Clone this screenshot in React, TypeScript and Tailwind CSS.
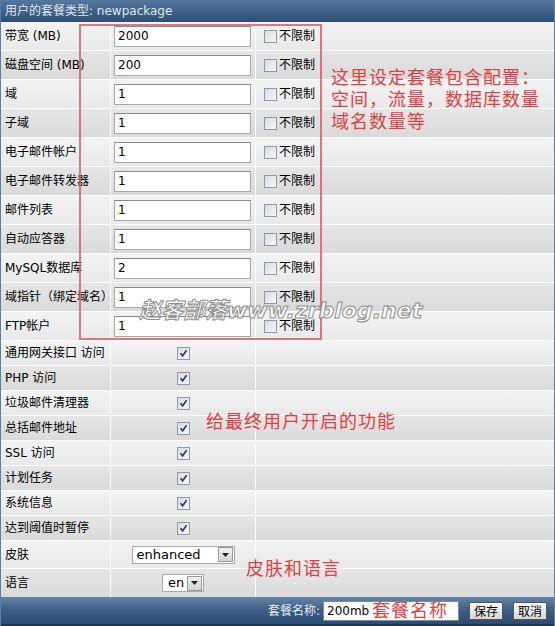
import React from 'react';

const limitRows = [
  { label: '带宽 (MB)', value: '2000' },
  { label: '磁盘空间 (MB)', value: '200' },
  { label: '域', value: '1' },
  { label: '子域', value: '1' },
  { label: '电子邮件帐户', value: '1' },
  { label: '电子邮件转发器', value: '1' },
  { label: '邮件列表', value: '1' },
  { label: '自动应答器', value: '1' },
  { label: 'MySQL数据库', value: '2' },
  { label: '域指针（绑定域名）', value: '1' },
  { label: 'FTP帐户', value: '1' },
];

const featureRows = [
  '通用网关接口 访问',
  'PHP 访问',
  '垃圾邮件清理器',
  '总括邮件地址',
  'SSL 访问',
  '计划任务',
  '系统信息',
  '达到阈值时暂停',
];

const rowBg = (i: number) =>
  i % 2 === 0
    ? 'bg-gradient-to-b from-[#f3f3f3] to-[#e9e9e9]'
    : 'bg-gradient-to-b from-[#e6e6e6] to-[#dadada]';

const Box = ({ checked }: { checked?: boolean }) => (
  <span className="inline-flex h-[13px] w-[13px] items-center justify-center border border-[#8d9aae] bg-gradient-to-br from-[#dcdcdc] to-[#f7f7f7]">
    {checked && (
      <svg width="9" height="9" viewBox="0 0 9 9">
        <path d="M1.5 4.2 L3.6 6.8 L7.6 1.2" fill="none" stroke="#2c3f73" strokeWidth="1.7" />
      </svg>
    )}
  </span>
);

const Arrow = () => (
  <span className="flex h-[15px] w-[15px] shrink-0 items-center justify-center border border-[#9a9a9a] bg-gradient-to-b from-[#f2f2f2] to-[#d2d2d2]">
    <svg width="7" height="4" viewBox="0 0 7 4">
      <path d="M0 0 H7 L3.5 4 Z" fill="#222" />
    </svg>
  </span>
);

const note = "pointer-events-none absolute text-[18px] tracking-[1px] text-[#e2403f] font-['Noto_Sans_CJK_SC',sans-serif]";

const App = () => {
  return (
    <div className="relative h-[626px] w-[555px] overflow-hidden border-x border-[#5d7ea4] bg-[#e8e8e8] text-[12px] text-black font-['DejaVu_Sans','Noto_Sans_CJK_SC',sans-serif]">
      {/* title bar */}
      <div className="flex h-[22px] items-center bg-gradient-to-b from-[#56789e] to-[#2c4e76] pl-[4px] text-[12px] text-[#dfe6ef]">
        用户的套餐类型: newpackage
      </div>

      {/* quotas */}
      {limitRows.map((r, i) => (
        <div key={r.label} className={`grid h-[29px] grid-cols-[110px_145px_1fr] border-b border-white ${rowBg(i)}`}>
          <div className="flex items-center whitespace-nowrap border-r border-white pl-[4px]">{r.label}</div>
          <div className="flex items-center border-r border-white pl-[3px]">
            <input
              readOnly
              defaultValue={r.value}
              className="h-[21px] w-[137px] border border-[#a9a9a9] border-t-[#8a8a8a] bg-white px-[3px] text-[12px] outline-none"
            />
          </div>
          <div className="flex items-center gap-[2px] pl-[8px]">
            <Box />
            <span>不限制</span>
          </div>
        </div>
      ))}

      {/* features */}
      {featureRows.map((label, i) => (
        <div key={label} className={`grid h-[25px] grid-cols-[110px_145px_1fr] border-b border-white ${rowBg(i)}`}>
          <div className="flex items-center whitespace-nowrap border-r border-white pl-[4px]">{label}</div>
          <div className="flex items-center justify-center border-r border-white">
            <Box checked />
          </div>
          <div />
        </div>
      ))}

      {/* skin / language */}
      <div className={`grid h-[28px] grid-cols-[110px_145px_1fr] border-b border-white ${rowBg(0)}`}>
        <div className="flex items-center border-r border-white pl-[4px]">皮肤</div>
        <div className="flex items-center justify-center border-r border-white">
          <div className="flex h-[18px] w-[103px] items-center justify-between border border-[#a9a9a9] bg-white pl-[4px] pr-px text-[13px]">
            enhanced
            <Arrow />
          </div>
        </div>
        <div />
      </div>
      <div className={`grid h-[28px] grid-cols-[110px_145px_1fr] ${rowBg(1)}`}>
        <div className="flex items-center border-r border-white pl-[4px]">语言</div>
        <div className="flex items-center justify-center border-r border-white">
          <div className="flex h-[18px] w-[42px] items-center justify-between border border-[#a9a9a9] bg-white pl-[5px] pr-px text-[13px]">
            en
            <Arrow />
          </div>
        </div>
        <div />
      </div>

      {/* bottom bar */}
      <div className="flex h-[29px] items-center justify-end gap-[10px] border-b-2 border-[#1f3553] bg-gradient-to-b from-[#6587ad] via-[#3b5d84] to-[#2b4b72] pr-[7px] text-[#e6ebf2]">
        <span>套餐名称:</span>
        <input
          readOnly
          defaultValue="200mb"
          className="-ml-[7px] h-[20px] w-[136px] border border-[#7a8aa0] bg-white px-[3px] text-[12px] text-black outline-none"
        />
        <button className="h-[18px] w-[34px] border border-[#555] bg-gradient-to-b from-[#fafafa] to-[#d6d6d6] text-[12px] text-black">
          保存
        </button>
        <button className="h-[18px] w-[34px] border border-[#555] bg-gradient-to-b from-[#fafafa] to-[#d6d6d6] text-[12px] text-black">
          取消
        </button>
      </div>

      {/* notes drawn over the form */}
      <div className="pointer-events-none absolute left-[78px] top-[24px] h-[316px] w-[243px] border-2 border-[#cf5c63]/80" />
      <div className={`${note} left-[330px] top-[65px] leading-[22px]`}>
        <div>这里设定套餐包含配置：</div>
        <div>空间，流量，数据库数量</div>
        <div>域名数量等</div>
      </div>
      <div className={`${note} left-[205px] top-[409px] leading-[22px]`}>给最终用户开启的功能</div>
      <div className={`${note} left-[245px] top-[556px] leading-[22px]`}>皮肤和语言</div>
      <div className={`${note} left-[371px] top-[598px] leading-[22px]`}>套餐名称</div>
      <div className="pointer-events-none absolute left-[138px] top-[298px] whitespace-nowrap text-[22px] font-bold italic leading-[26px] text-white/75 [-webkit-text-stroke:1px_#8f8f8f] font-['DejaVu_Sans','Noto_Sans_CJK_SC',sans-serif]">
        赵客部落www.zrblog.net
      </div>
    </div>
  );
};

export default App;
